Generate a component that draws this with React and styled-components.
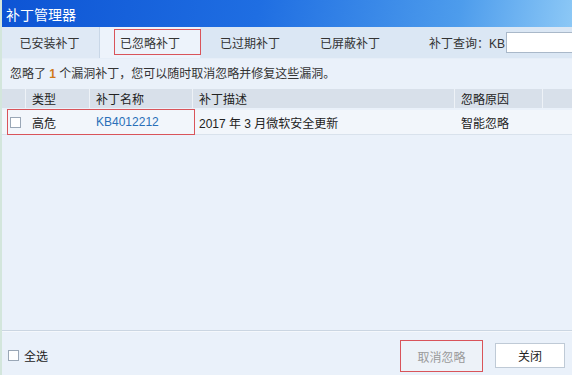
import React from "react";
import styled, { createGlobalStyle } from "styled-components";

const GlobalStyle = createGlobalStyle`
  html, body {
    margin: 0;
    padding: 0;
    background: #eaf1fa;
  }
  body {
    font-family: "Liberation Sans", "Noto Sans CJK SC", sans-serif;
    font-size: 12px;
    color: #222;
  }
`;

const Window = styled.div`
  width: 572px;
  height: 375px;
  display: flex;
  flex-direction: column;
  overflow: hidden;
  background: #eaf1fa;
  border-left: 2px solid #d3e6dc;
  box-sizing: border-box;
`;

const TitleBar = styled.div`
  height: 27px;
  flex: none;
  display: flex;
  align-items: center;
  padding-left: 6px;
  margin-left: -2px;
  color: #fff;
  font-size: 14px;
  background: linear-gradient(100deg, #0d54d4 0%, #1f6ee2 45%, #4d9cec 80%, #8cc8f6 100%);
`;

const TabBar = styled.div`
  height: 31px;
  flex: none;
  display: flex;
  align-items: stretch;
  margin-left: -2px;
  background: #dbe7f4;
  border-bottom: 1px solid #e6eef8;
`;

const Tab = styled.div`
  position: relative;
  width: 100px;
  display: flex;
  align-items: center;
  justify-content: center;
  font-size: 12px;
  color: #333;
  background: ${(p) => (p.$first ? "#dfe9f5" : p.$active ? "#edf3fb" : "transparent")};
  border-right: ${(p) => (p.$first ? "1px solid #c9d7e7" : "none")};
  box-sizing: border-box;
`;

const RedMark = styled.div`
  position: absolute;
  border: 1px solid #d9545a;
  pointer-events: none;
`;

const Search = styled.div`
  margin-left: auto;
  display: flex;
  align-items: center;
  gap: 1px;
  font-size: 12px;
  color: #333;
`;

const SearchInput = styled.div`
  width: 65px;
  height: 19px;
  background: #fff;
  border: 1px solid #a9b8c9;
  border-right: none;
`;

const Info = styled.div`
  padding: 8px 8px 0;
  height: 23px;
  line-height: 15px;
  color: #333;
  box-sizing: border-box;
  b {
    color: #d07a1a;
    font-weight: bold;
  }
`;

const Table = styled.div`
  margin-top: 7px;
  display: flex;
  flex-direction: column;
`;

const Row = styled.div`
  position: relative;
  display: grid;
  grid-template-columns: 24px 64px 103px 262px 88px 1fr;
  height: ${(p) => (p.$head ? "19px" : "24px")};
  margin-top: ${(p) => (p.$head ? "0" : "2px")};
  background: ${(p) => (p.$head ? "#d8e0ea" : "#f2f6fb")};
  border-bottom: ${(p) => (p.$head ? "none" : "1px solid #d9e2ec")};
`;

const Cell = styled.div`
  display: flex;
  align-items: center;
  padding-left: ${(p) => (p.$pad ? p.$pad : "6px")};
  border-right: ${(p) => (p.$sep ? "1px solid #eef2f7" : "none")};
  color: ${(p) => (p.$link ? "#2a6fb8" : "#222")};
  font-size: 12px;
  white-space: nowrap;
  overflow: hidden;
`;

const Check = styled.span`
  display: inline-block;
  width: 11px;
  height: 11px;
  border: 1px solid #9aa7b6;
  background: #fff;
  box-sizing: border-box;
`;

const Spacer = styled.div`
  flex: 1;
`;

const Footer = styled.div`
  height: 44px;
  flex: none;
  display: flex;
  align-items: center;
  padding: 0 7px 0 6px;
  border-top: 1px solid #cbd6e2;
  box-shadow: inset 0 1px 0 #f5f8fc;
`;

const SelectAll = styled.label`
  display: flex;
  align-items: center;
  gap: 5px;
  font-size: 12px;
  color: #222;
  margin-top: 4px;
`;

const Button = styled.div`
  position: relative;
  width: ${(p) => p.$w || "70px"};
  height: ${(p) => p.$h || "25px"};
  display: flex;
  align-items: center;
  justify-content: center;
  box-sizing: border-box;
  font-size: 12px;
  margin-left: ${(p) => p.$gap || "0"};
  margin-top: ${(p) => p.$top || "4px"};
  background: ${(p) => (p.$disabled ? "#edf2f8" : "#fff")};
  color: ${(p) => (p.$disabled ? "#9a9a9a" : "#222")};
  border: 1px solid ${(p) => (p.$disabled ? "transparent" : "#bfcad6")};
`;

export default function App() {
  const tabs = ["已安装补丁", "已忽略补丁", "已过期补丁", "已屏蔽补丁"];
  return (
    <>
      <GlobalStyle />
      <Window>
        <TitleBar>补丁管理器</TitleBar>
        <TabBar>
          {tabs.map((t, i) => (
            <Tab key={t} $first={i === 0} $active={i === 1}>
              {t}
              {i === 1 && (
                <RedMark style={{ left: 14, top: 2, width: 85, height: 24 }} />
              )}
            </Tab>
          ))}
          <Search>
            补丁查询：KB
            <SearchInput />
          </Search>
        </TabBar>
        <Info>
          忽略了 <b>1</b> 个漏洞补丁，您可以随时取消忽略并修复这些漏洞。
        </Info>
        <Table>
          <Row $head>
            <Cell $sep />
            <Cell $sep>类型</Cell>
            <Cell $sep>补丁名称</Cell>
            <Cell $sep>补丁描述</Cell>
            <Cell $sep>忽略原因</Cell>
            <Cell />
          </Row>
          <Row>
            <Cell $pad="8px">
              <Check />
            </Cell>
            <Cell>高危</Cell>
            <Cell $link>KB4012212</Cell>
            <Cell>2017 年 3 月微软安全更新</Cell>
            <Cell>智能忽略</Cell>
            <Cell />
            <RedMark style={{ left: 5, top: -1, width: 186, height: 24 }} />
          </Row>
        </Table>
        <Spacer />
        <Footer>
          <SelectAll>
            <Check />
            全选
          </SelectAll>
          <Spacer />
          <Button $w="83px" $h="32px" $top="6px" $disabled>
            取消忽略
            <RedMark style={{ left: -1, top: -1, width: 81, height: 30 }} />
          </Button>
          <Button $w="70px" $gap="12px">
            关闭
          </Button>
        </Footer>
      </Window>
    </>
  );
}
